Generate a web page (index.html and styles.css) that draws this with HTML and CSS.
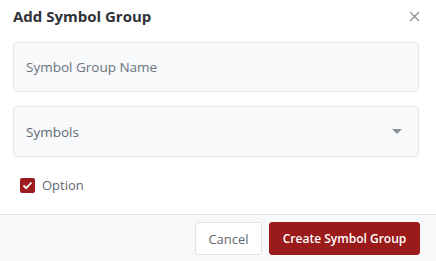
FILE: index.html
```html
<!DOCTYPE html>
<html lang="en">
<head>
  <meta charset="UTF-8">
  <title>Add Symbol Group</title>
  <link rel="stylesheet" href="styles.css">
</head>
<body>
  <div class="modal">
    <div class="modal-header">
      <h2 class="modal-title">Add Symbol Group</h2>
      <button class="close" aria-label="Close">
        <svg width="11" height="11" viewBox="0 0 11 11"><path d="M1 1L10 10M10 1L1 10" stroke="#8a929c" stroke-width="1.3" fill="none"/></svg>
      </button>
    </div>
    <div class="modal-body">
      <input class="field" type="text" placeholder="Symbol Group Name">
      <div class="field select">
        <span>Symbols</span>
        <span class="caret"></span>
      </div>
      <label class="option">
        <span class="check">
          <svg width="11" height="9" viewBox="0 0 11 9"><path d="M1.5 4.5L4.2 7.2L9.5 1.5" stroke="#fff" stroke-width="1.8" fill="none"/></svg>
        </span>
        Option
      </label>
    </div>
    <div class="modal-footer">
      <button class="btn btn-default">Cancel</button>
      <button class="btn btn-primary">Create Symbol Group</button>
    </div>
  </div>
</body>
</html>
```

FILE: styles.css
```css
body {
  margin: 0;
  background: #fff;
  font-family: 'Open Sans', 'Noto Sans', sans-serif;
  color: #333;
}

.modal {
  width: 436px;
  height: 261px;
  display: flex;
  flex-direction: column;
}

.modal-header {
  display: flex;
  align-items: center;
  justify-content: space-between;
  padding: 0 16px 0 13px;
  height: 32px;
}

.modal-title {
  margin: 0;
  font-size: 15px;
  font-weight: 700;
  color: #2f3237;
}

.close {
  border: none;
  background: none;
  padding: 0;
  display: flex;
  cursor: pointer;
}

.modal-body {
  padding: 10px 17px 0 13px;
  flex: 1;
}

.field {
  box-sizing: border-box;
  display: flex;
  align-items: center;
  width: 100%;
  height: 50px;
  padding: 0 12px;
  background: #f8f9fb;
  border: 1px solid #e3e6eb;
  border-radius: 4px;
  font-family: inherit;
  font-size: 13.5px;
  color: #5f6773;
  outline: none;
}

.field::placeholder {
  color: #6b737e;
}

.select {
  margin-top: 14px;
  height: 51px;
  justify-content: space-between;
}

.caret {
  width: 0;
  height: 0;
  border-left: 5px solid transparent;
  border-right: 5px solid transparent;
  border-top: 5px solid #8c939c;
  margin-right: 4px;
}

.option {
  display: flex;
  align-items: center;
  gap: 7px;
  margin: 19px 0 0 7px;
  font-size: 13px;
  color: #5f6773;
}

.check {
  width: 15px;
  height: 15px;
  border-radius: 2px;
  background: #9b1b1f;
  display: flex;
  align-items: center;
  justify-content: center;
}

.modal-footer {
  display: flex;
  justify-content: flex-end;
  gap: 7px;
  padding: 7px 16px 0;
  height: 39px;
  background: #f8f9fb;
  border-top: 1px solid #e1e4ea;
}

.btn {
  height: 33px;
  border-radius: 3px;
  font-family: inherit;
  font-size: 13px;
  cursor: pointer;
}

.btn-default {
  width: 67px;
  background: #fff;
  border: 1px solid #dfe2e7;
  color: #5f6773;
}

.btn-primary {
  width: 151px;
  background: #9b1a1a;
  border: 1px solid #9b1a1a;
  color: #fff;
  font-size: 12px;
  font-weight: 600;
}
```
